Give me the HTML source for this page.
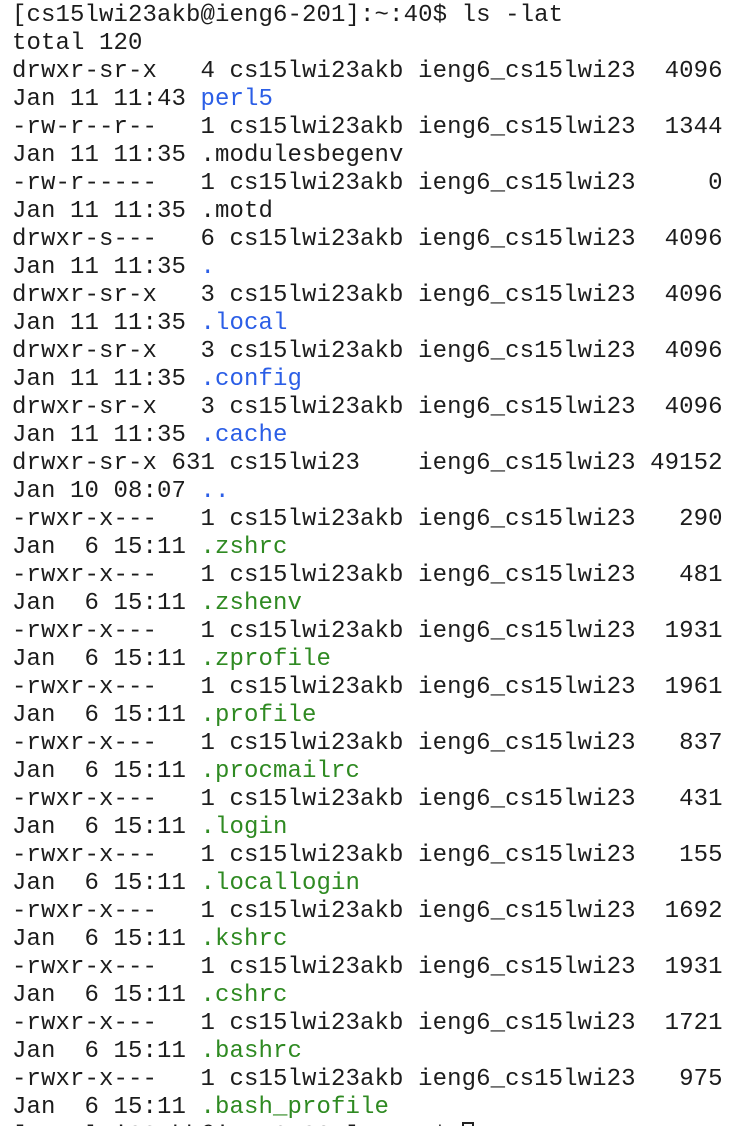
<!DOCTYPE html>
<html><head><meta charset="utf-8"><style>
html,body{margin:0;padding:0;background:#fff;width:734px;height:1126px;max-height:1126px;overflow:hidden;position:relative}
pre{margin:0;position:absolute;left:12px;top:2px;font-family:"Liberation Mono",monospace;font-size:24px;letter-spacing:0.1px;line-height:28px;color:#1c1c1c;white-space:pre}
.b{color:#2b5ee6}.g{color:#2f8a22}
.cur{display:inline-block;width:12px;height:24px;border:2px solid #222;box-sizing:border-box;vertical-align:-4px}
</style></head><body><pre>[cs15lwi23akb@ieng6-201]:~:40$ ls -lat
total 120
drwxr-sr-x   4 cs15lwi23akb ieng6_cs15lwi23  4096
Jan 11 11:43 <span class="b">perl5</span>
-rw-r--r--   1 cs15lwi23akb ieng6_cs15lwi23  1344
Jan 11 11:35 .modulesbegenv
-rw-r-----   1 cs15lwi23akb ieng6_cs15lwi23     0
Jan 11 11:35 .motd
drwxr-s---   6 cs15lwi23akb ieng6_cs15lwi23  4096
Jan 11 11:35 <span class="b">.</span>
drwxr-sr-x   3 cs15lwi23akb ieng6_cs15lwi23  4096
Jan 11 11:35 <span class="b">.local</span>
drwxr-sr-x   3 cs15lwi23akb ieng6_cs15lwi23  4096
Jan 11 11:35 <span class="b">.config</span>
drwxr-sr-x   3 cs15lwi23akb ieng6_cs15lwi23  4096
Jan 11 11:35 <span class="b">.cache</span>
drwxr-sr-x 631 cs15lwi23    ieng6_cs15lwi23 49152
Jan 10 08:07 <span class="b">..</span>
-rwxr-x---   1 cs15lwi23akb ieng6_cs15lwi23   290
Jan  6 15:11 <span class="g">.zshrc</span>
-rwxr-x---   1 cs15lwi23akb ieng6_cs15lwi23   481
Jan  6 15:11 <span class="g">.zshenv</span>
-rwxr-x---   1 cs15lwi23akb ieng6_cs15lwi23  1931
Jan  6 15:11 <span class="g">.zprofile</span>
-rwxr-x---   1 cs15lwi23akb ieng6_cs15lwi23  1961
Jan  6 15:11 <span class="g">.profile</span>
-rwxr-x---   1 cs15lwi23akb ieng6_cs15lwi23   837
Jan  6 15:11 <span class="g">.procmailrc</span>
-rwxr-x---   1 cs15lwi23akb ieng6_cs15lwi23   431
Jan  6 15:11 <span class="g">.login</span>
-rwxr-x---   1 cs15lwi23akb ieng6_cs15lwi23   155
Jan  6 15:11 <span class="g">.locallogin</span>
-rwxr-x---   1 cs15lwi23akb ieng6_cs15lwi23  1692
Jan  6 15:11 <span class="g">.kshrc</span>
-rwxr-x---   1 cs15lwi23akb ieng6_cs15lwi23  1931
Jan  6 15:11 <span class="g">.cshrc</span>
-rwxr-x---   1 cs15lwi23akb ieng6_cs15lwi23  1721
Jan  6 15:11 <span class="g">.bashrc</span>
-rwxr-x---   1 cs15lwi23akb ieng6_cs15lwi23   975
Jan  6 15:11 <span class="g">.bash_profile</span>
[cs15lwi23akb@ieng6-201]:~:41$ <span class="cur"></span></pre></body></html>
